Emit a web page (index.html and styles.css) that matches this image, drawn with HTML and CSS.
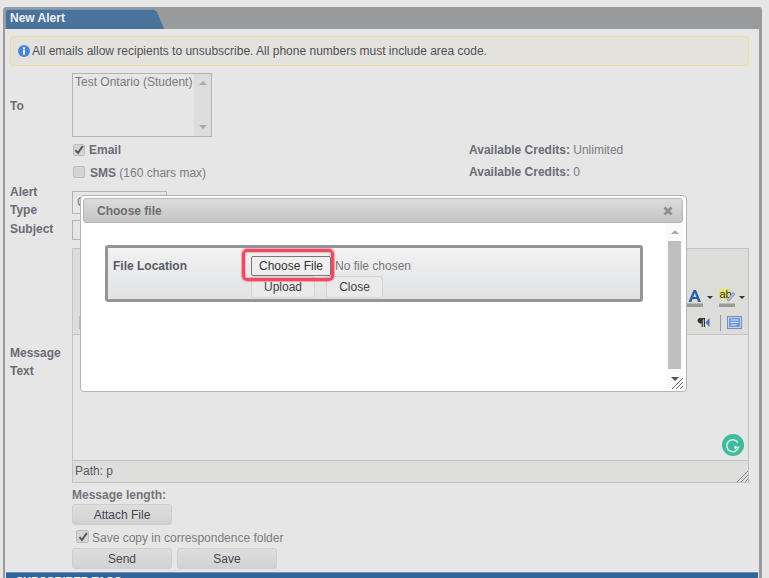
FILE: index.html
```html
<!DOCTYPE html>
<html lang="en">
<head>
<meta charset="utf-8">
<title>New Alert</title>
<link rel="stylesheet" href="styles.css">
</head>
<body>
<div class="page">
  <section class="panel">
    <header class="panel-head">
      <h1 class="tab">New Alert</h1>
    </header>
    <div class="panel-body">
      <div class="notice">
        <svg class="info" width="12" height="12" viewBox="0 0 12 12"><circle cx="6" cy="6" r="6" fill="#4a86d8"/><rect x="5" y="5" width="2" height="4.6" fill="#fff"/><rect x="5" y="2.3" width="2" height="1.8" fill="#fff"/></svg>
        <span>All emails allow recipients to unsubscribe. All phone numbers must include area code.</span>
      </div>
      <div class="form">
        <div class="row row-to">
          <label class="lbl">To</label>
          <div class="listbox">
            <span class="list-item">Test Ontario (Student)</span>
            <div class="list-scroll"><i class="up"></i><i class="down"></i></div>
          </div>
        </div>
        <div class="row row-channel">
          <span class="lbl"></span>
          <label class="channel"><span class="check on"><svg width="10" height="10" viewBox="0 0 10 10"><path d="M1.5 5.2 4 8l4.8-7" fill="none" stroke="#555" stroke-width="2"/></svg></span><b class="email-t">Email</b></label>
          <span class="credits"><b>Available Credits:</b> Unlimited</span>
        </div>
        <div class="row row-channel row-sms">
          <span class="lbl"></span>
          <label class="channel"><span class="check"></span><span><b>SMS</b> (160 chars max)</span></label>
          <span class="credits"><b>Available Credits:</b> 0</span>
        </div>
        <div class="row row-type">
          <label class="lbl">Alert<br>Type</label>
          <div class="select">C</div>
        </div>
        <div class="row row-subject">
          <label class="lbl">Subject</label>
          <div class="input"></div>
        </div>
        <div class="row row-editor">
          <label class="lbl lbl-msg">Message<br>Text</label>
          <div class="editor">
            <div class="toolbar">
              <div class="tools-top">
                <svg width="16" height="18" viewBox="0 0 16 18"><path d="M1.500 13 6.500 1h2.500l5 12h-3l-1-3H5.500l-1 3zM6.300 8h3L7.800 3.800z" fill="#2f5fa8"/><rect x="0" y="14.500" width="16" height="3.500" fill="#9a9a9a"/></svg>
                <i class="caret"></i>
                <svg class="tool-ab" width="16" height="18" viewBox="0 0 16 18"><rect x="0" y="0" width="11" height="10" fill="#e8e06a"/><text x="0.500" y="8.500" class="ab">ab</text><path d="M8 11 14 3.500l2 1.500-6 7z" fill="#a9c0e6" stroke="#5a7cb0" stroke-width=".6"/><rect x="0" y="14.500" width="16" height="3.500" fill="#9a9a9a"/></svg>
                <i class="caret"></i>
              </div>
              <div class="tools-bottom">
                <i class="peek"></i>
                <div class="tools-right">
                  <svg width="13" height="10" viewBox="0 0 13 10"><path d="M2.500 0H8v9H6.800V1.200H5.800V9H4.600V5.200A2.700 2.600 0 0 1 2.500 0z" fill="#333"/><path d="M12.500 0v9L8.500 4.500z" fill="#3f74c4"/></svg>
                  <i class="sep"></i>
                  <svg width="15" height="13" viewBox="0 0 15 13"><rect x=".5" y=".5" width="14" height="12" fill="#c5d3ea" stroke="#7f8ea8"/><rect x="2" y="2" width="11" height="9" fill="#6d95d9"/><path d="M3.500 4h8M3.500 6.500h8M3.500 9h6" stroke="#dfe8f7"/></svg>
                </div>
              </div>
            </div>
            <div class="editor-body">
              <svg class="grammarly" width="22" height="22" viewBox="0 0 22 22"><circle cx="11" cy="11" r="11" fill="#3fbb9b"/><path d="M15.800 8.500A6 6 0 1 0 16.500 13.500H12.500" fill="none" stroke="#d9f3ea" stroke-width="1.500"/><path d="M12.500 11.500v4l3.500-2z" fill="#d9f3ea"/></svg>
            </div>
            <div class="pathbar">Path: p
              <svg class="grip" width="11" height="11" viewBox="0 0 11 11"><path d="M0 11 11 0M4 11l7-7M8 11l3-3" stroke="#8a8a8a" stroke-width="1"/></svg>
            </div>
          </div>
        </div>
        <div class="after">
          <div class="length">Message length:</div>
          <button class="btn btn-attach" type="button">Attach File</button>
          <label class="save-copy"><span class="check on"><svg width="10" height="10" viewBox="0 0 10 10"><path d="M1.500 5.200 4 8l4.800-7" fill="none" stroke="#555" stroke-width="2"/></svg></span><span class="save-text">Save copy in correspondence folder</span></label>
          <div class="actions">
            <button class="btn" type="button">Send</button>
            <button class="btn" type="button">Save</button>
          </div>
        </div>
      </div>
    </div>
    <div class="next-bar"><span>SUBSCRIBER TAGS</span></div>
  </section>
</div>
<div class="dialog">
  <div class="dialog-title"><span>Choose file</span>
    <svg width="10" height="10" viewBox="0 0 10 10"><path d="M1.500 1.500l7 7M8.500 1.500l-7 7" stroke="#8d8d8d" stroke-width="2.800"/></svg>
  </div>
  <div class="dialog-content">
    <div class="upload-box">
      <span class="upload-lbl">File Location</span>
      <div class="upload-fields">
        <div class="file-line">
          <span class="highlight"><button class="file-btn" type="button">Choose File</button></span>
          <span class="no-file">No file chosen</span>
        </div>
        <div class="upload-actions">
          <button class="mini" type="button">Upload</button>
          <button class="mini mini-close" type="button">Close</button>
        </div>
      </div>
    </div>
    <div class="dlg-scroll"><i class="up"></i><div class="dlg-thumb"></div><i class="down dark"></i></div>
    <svg class="dlg-grip" width="11" height="11" viewBox="0 0 11 11"><path d="M0 11 11 0M4 11l7-7M8 11l3-3" stroke="#666" stroke-width="1"/></svg>
  </div>
</div>
</body>
</html>
```
FILE: styles.css
```css
* { box-sizing: border-box; }
html, body { margin: 0; height: 100%; }
body {
  width: 769px;
  height: 578px;
  overflow: hidden;
  background: #e6e6e6;
  font: 12px "Liberation Sans", Arial, sans-serif;
  color: #6b6b70;
  position: relative;
}
.page { padding: 7px 7px 0 3px; }
.panel {
  height: 571px;
  border: solid #999a9b;
  border-width: 0 3px 0 2px;
  border-top-left-radius: 4px;
  border-top-right-radius: 4px;
  background: #e6e6e6;
  display: flex;
  flex-direction: column;
}
.panel-head {
  height: 22px;
  flex: none;
  background: #999a9b;
  border-radius: 4px 4px 0 0;
  margin: 0 -3px 0 -2px;
  padding: 2px 0 0 3px;
}
.tab {
  margin: 0;
  width: 158px;
  height: 20px;
  padding: 0 0 0 4px;
  font-size: 12px;
  line-height: 16px;
  font-weight: bold;
  color: #eef1f4;
  background: #4a739c;
  border-top: 1px solid #6f98c4;
  clip-path: polygon(0 0, 147px 0, 151px 3px, 158px 20px, 0 20px);
  border-radius: 3px 0 0 0;
}
.panel-body { flex: 1; padding: 7px 10px 0 5px; }
.notice {
  height: 30px;
  display: flex;
  align-items: center;
  gap: 2px;
  padding-left: 7px;
  background: #e3e2dc;
  border: 1px solid #eadf9e;
  border-radius: 3px;
  color: #50505a;
}
.info { flex: none; }
.form { padding-top: 7px; }
.row { display: flex; }
.lbl {
  flex: none;
  width: 62px;
  font-weight: bold;
  color: #6b6b76;
  line-height: 18px;
}
.row-to { height: 64px; align-items: center; }
.row-to .lbl { margin-top: 2px; }
.listbox {
  width: 140px;
  height: 64px;
  border: 1px solid #b4b4b4;
  display: flex;
  justify-content: space-between;
}
.list-item { padding: 1px 0 0 2px; color: #80787c; line-height: 14px; white-space: nowrap; }
.list-scroll {
  width: 17px;
  background: #dcdcdc;
  display: flex;
  flex-direction: column;
  justify-content: space-between;
  align-items: center;
  padding: 7px 0;
}
.up, .down { display: block; width: 0; height: 0; border: 4px solid transparent; border-top-width: 0; border-bottom: 4px solid #aaa; }
.down { border-bottom-width: 0; border-top: 4px solid #aaa; border-bottom-color: transparent; }
.row-channel { height: 22px; margin-top: 3px; align-items: center; }
.row-sms { margin-top: 0; }
.channel { display: flex; align-items: center; gap: 5px; width: 397px; color: #7b7b80; }
.channel .check { margin: -3px 0 0 1px; width: 12px; height: 12px; }
.channel b { color: #6b6b76; }
.email-t { font-weight: bold; margin: -2px 0 0 -1px; }
.check {
  flex: none;
  width: 13px;
  height: 13px;
  border: 1px solid #bdbdbd;
  border-radius: 2px;
  background: #d4d4d4;
  display: flex;
  align-items: center;
  justify-content: center;
}
.credits { color: #7b7b80; white-space: nowrap; margin-top: -2px; }
.credits b { color: #6b6b76; }
.row-type { height: 36px; }
.row-type .lbl { margin-top: -1px; }
.select {
  width: 95px;
  height: 23px;
  margin-top: 7px;
  padding: 3px 0 0 4px;
  border: 1px solid #b4b4b4;
  color: #777;
}
.row-subject { height: 28px; align-items: flex-start; }
.row-subject .input { width: 200px; height: 20px; border: 1px solid #b4b4b4; }
.row-editor { height: 235px; }
.lbl-msg { padding-top: 96px; }
.editor {
  width: 677px;
  height: 235px;
  border: 1px solid #c4c4c4;
  display: flex;
  flex-direction: column;
}
.toolbar {
  height: 86px;
  flex: none;
  background: #dcdcda;
  border-bottom: 1px solid #c4c4c4;
  padding: 40px 3px 0 0;
  display: flex;
  flex-direction: column;
  align-items: flex-end;
}
.tools-top { display: flex; align-items: flex-start; width: 58px; gap: 4px; height: 18px; }
.caret {
  display: block;
  flex: none;
  width: 0;
  height: 0;
  margin-top: 7px;
  border: 3px solid transparent;
  border-bottom-width: 0;
  border-top: 3px solid #333;
}
.tool-ab { margin-left: 2px; }
.ab { font: 11px "Liberation Sans", sans-serif; fill: #333; }
.tools-bottom { display: flex; align-items: center; justify-content: space-between; align-self: stretch; margin-top: 7px; height: 17px; padding: 0 3px 0 6px; }
.tools-right { display: flex; align-items: center; }
.peek { display: block; width: 3px; height: 13px; background: #a9bbdc; }
.sep { display: block; width: 1px; height: 16px; background: #8e9cb0; margin: 0 6px 0 10px; }
.editor-body { flex: 1; position: relative; }
.grammarly { position: absolute; right: 4px; bottom: 4px; }
.pathbar {
  height: 22px;
  flex: none;
  background: #dededc;
  border-top: 1px solid #c4c4c4;
  padding-left: 2px;
  line-height: 21px;
  color: #5a5560;
  position: relative;
}
.grip { position: absolute; right: 0; bottom: 0; }
.after { padding-left: 62px; }
.length { font-weight: bold; height: 21px; padding-top: 5px; line-height: 15px; color: #74747c; }
.btn {
  display: block;
  width: 100px;
  height: 21px;
  padding: 0;
  border: 1px solid #cfcfcf;
  border-radius: 3px;
  background: linear-gradient(#dedede, #d2d2d2);
  font: 12px "Liberation Sans", sans-serif;
  color: #4a4450;
}
.save-copy { display: flex; align-items: center; gap: 3px; height: 23px; padding: 0 0 0 4px; color: #7b7b80; }
.save-text { margin-top: 3px; }
.actions { display: flex; gap: 5px; }
.next-bar {
  height: 6px;
  flex: none;
  margin: 0 1px;
  overflow: hidden;
  background: #34659a;
  padding-left: 10px;
  border-top: 1px solid #6e93b8;
}
.next-bar span { display: block; margin-top: 1px; font-size: 11px; line-height: 14px; font-weight: bold; color: #fff; }

.dialog {
  position: absolute;
  left: 80px;
  top: 195px;
  width: 607px;
  height: 197px;
  background: #fff;
  border: 1px solid #b5b5b5;
  border-radius: 4px;
  padding: 2px 3px 2px 2px;
}
.dialog-title {
  height: 25px;
  background: linear-gradient(#dcdcdc, #c4c4c4);
  border: 1px solid #b5b5b5;
  border-radius: 3px;
  padding: 0 9px 0 13px;
  display: flex;
  align-items: center;
  justify-content: space-between;
  font-weight: bold;
  color: #6e6e6e;
}
.dialog-content { position: relative; height: 166px; padding: 22px 0 0 22px; }
.upload-box {
  width: 538px;
  height: 57px;
  border: 3px solid #959595;
  border-radius: 3px;
  background: linear-gradient(#f2f2f3, #e1e2e3);
  display: flex;
  padding: 8px 0 0 5px;
}
.upload-lbl { width: 138px; flex: none; margin-top: 3px; font-weight: bold; color: #5a5a66; line-height: 14px; }
.file-line { display: flex; align-items: center; height: 20px; }
.highlight {
  display: block;
  position: relative;
  z-index: 1;
  margin: -7px 0 -5px -9px;
  padding: 4px 0 2px 6px;
  border: 3px solid #ee4a64;
  border-radius: 5px;
  box-shadow: 0 0 1px 1px rgba(240, 60, 90, .4), inset 0 0 1px 1px rgba(240, 60, 90, .3);
}
.file-btn {
  display: block;
  width: 80px;
  height: 20px;
  padding: 0;
  border: 1px solid #777;
  border-radius: 2px;
  background: #efefef;
  font: 12px "Liberation Sans", sans-serif;
  color: #333;
}
.no-file { margin-left: 1px; color: #777; }
.upload-actions { display: flex; gap: 11px; }
.mini {
  width: 64px;
  height: 22px;
  padding: 0;
  border: 1px solid #d4d4d4;
  border-radius: 3px;
  background: #eaeaea;
  font: 12px "Liberation Sans", sans-serif;
  color: #444;
}
.mini-close { width: 57px; }
.dlg-scroll {
  position: absolute;
  right: 0;
  top: 0;
  bottom: 0;
  width: 17px;
  background: #fafafa;
  display: flex;
  flex-direction: column;
  align-items: center;
  padding-top: 7px;
}
.dlg-thumb { width: 13px; height: 128px; margin-top: 7px; background: #bfbfbf; }
.dlg-scroll .down { margin-top: 8px; border-top-color: #555; }
.dlg-grip { position: absolute; right: 0; bottom: 0; }
```
